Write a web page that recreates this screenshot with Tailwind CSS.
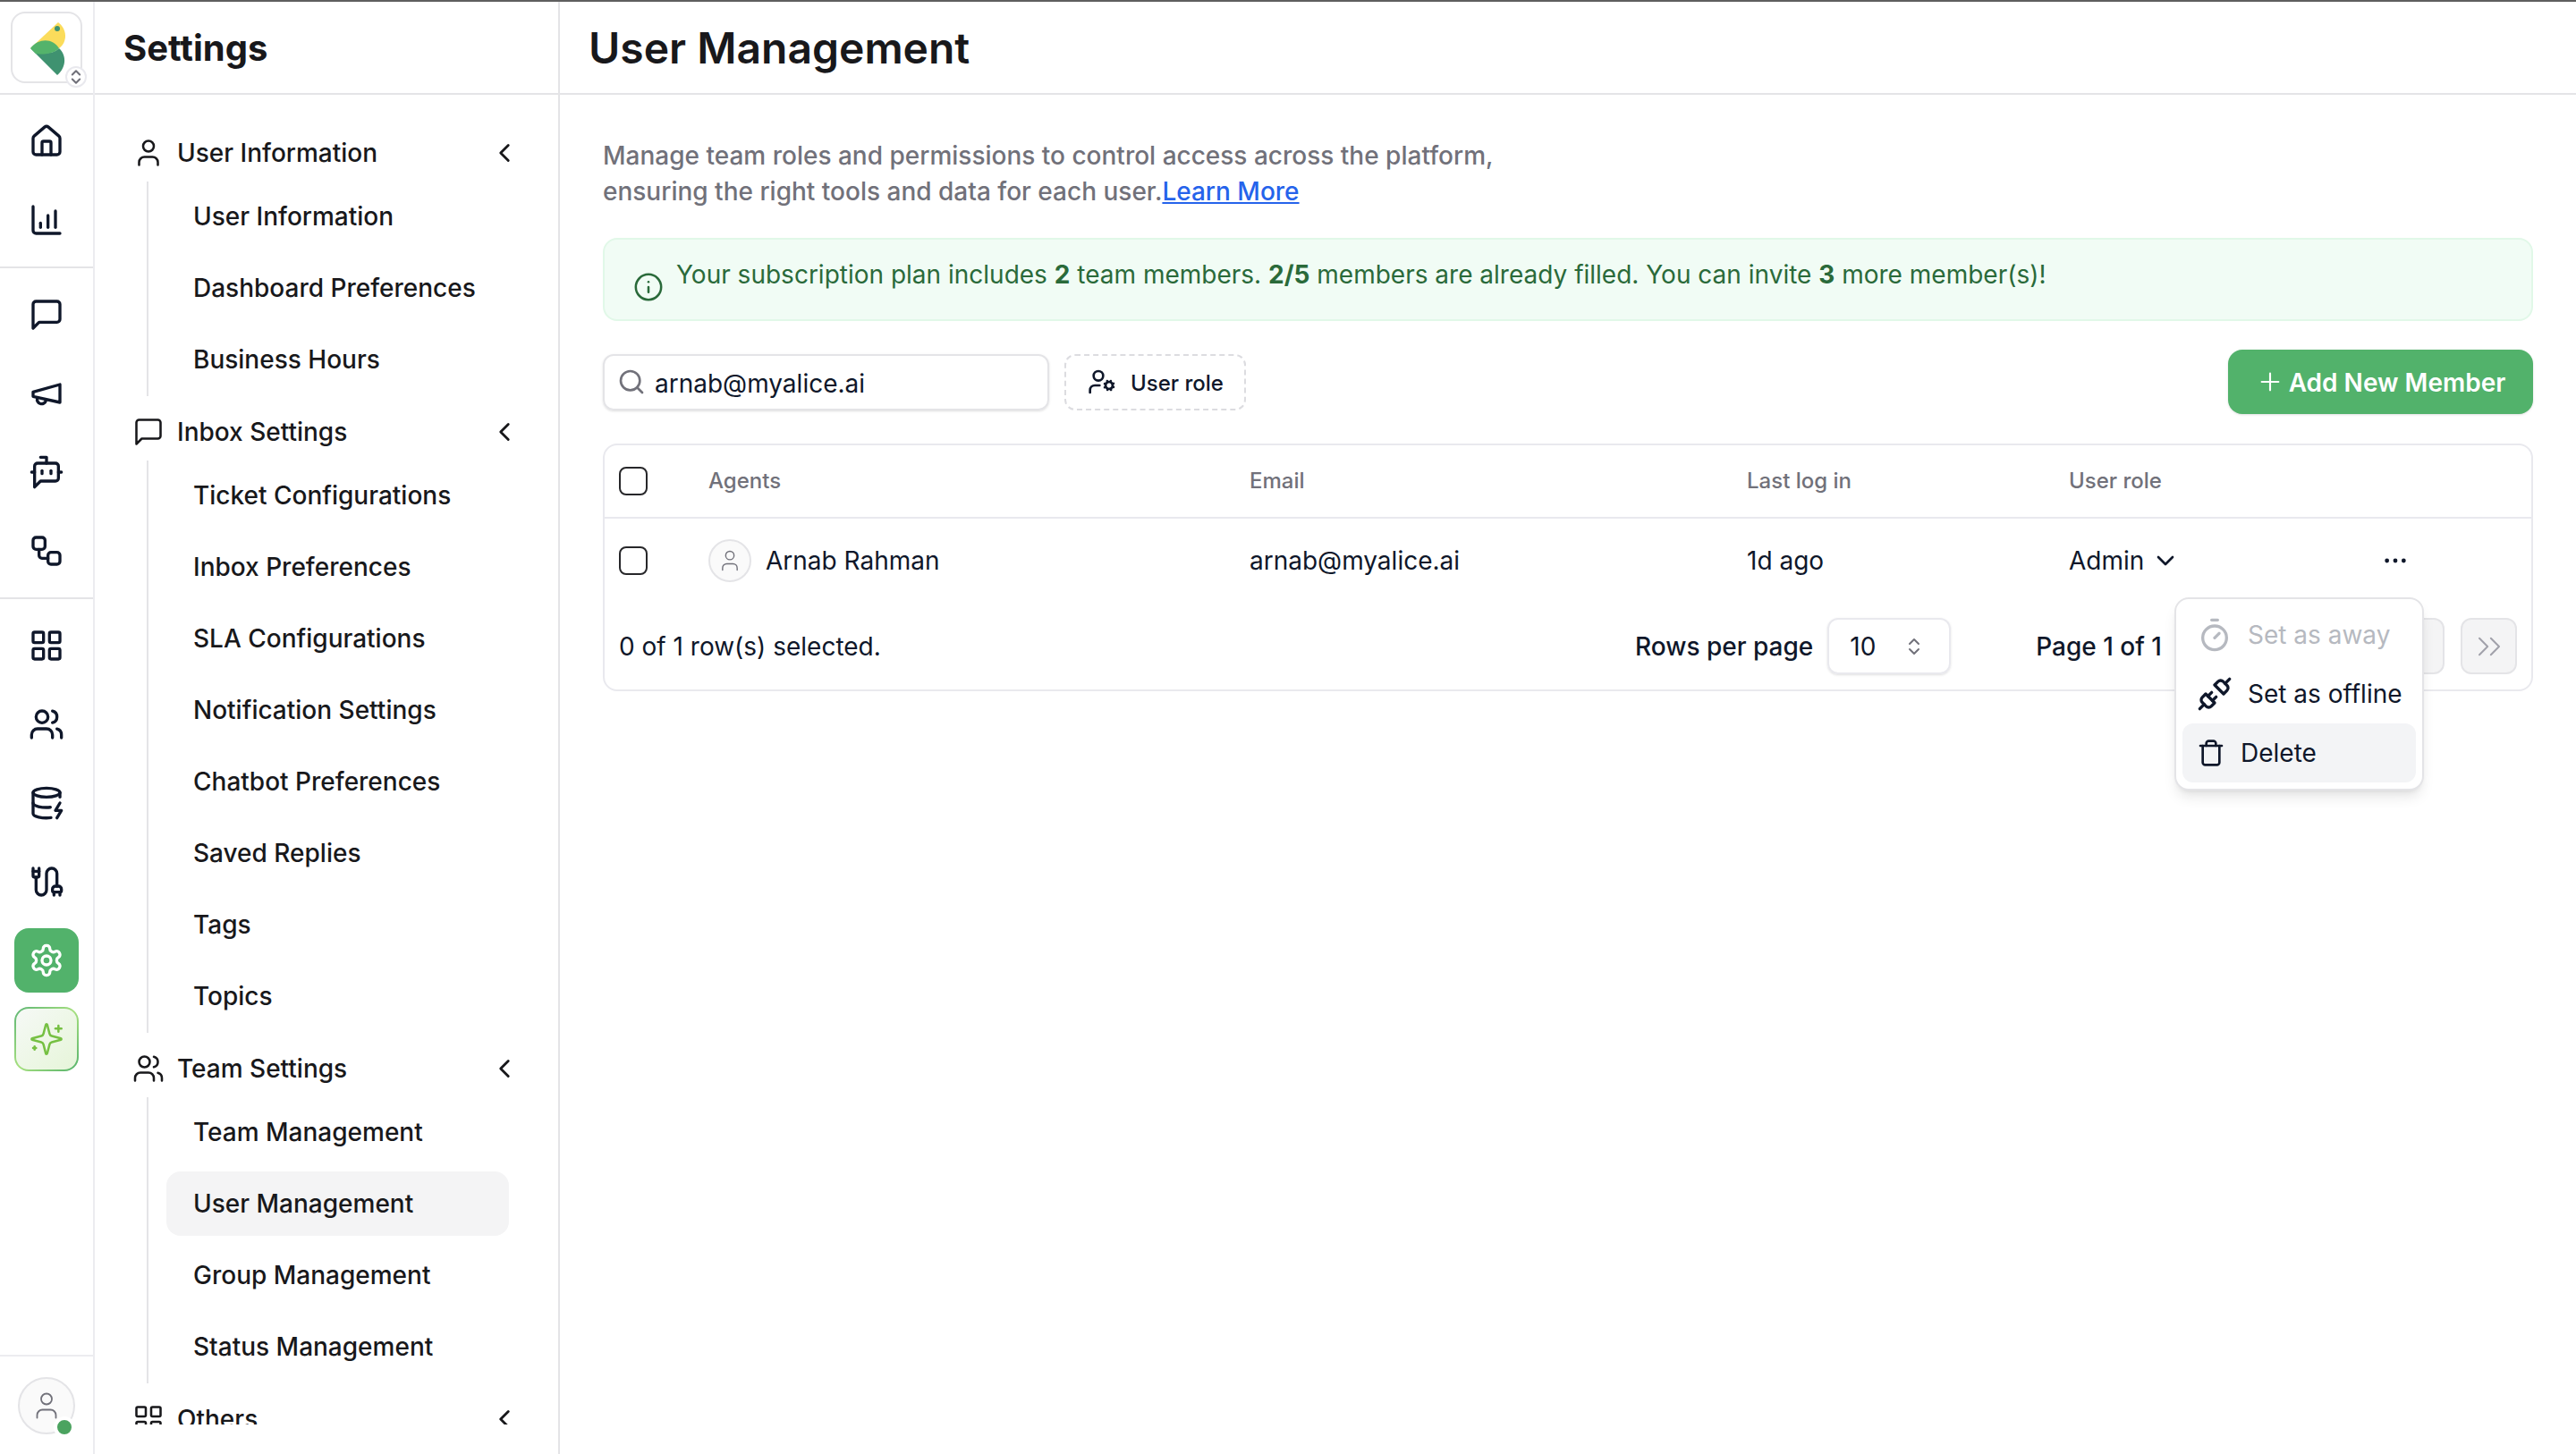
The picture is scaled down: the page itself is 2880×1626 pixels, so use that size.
<!DOCTYPE html>
<html lang="en">
<head>
    <meta charset="UTF-8">
    <title>User Management</title>
    <script src="https://cdn.jsdelivr.net/npm/@tailwindcss/browser@4"></script>
</head>
<body class="bg-white overflow-hidden font-['Inter',sans-serif] text-[28px] text-[#09090b]">
<div class="w-[2880px] h-[1626px] flex flex-col border-t-2 border-[#5f5f5f]">
    <div class="flex flex-1 min-h-0">
        <!-- Icon rail -->
        <aside class="w-[106px] shrink-0 border-r-2 border-[#ececf0] flex flex-col text-[#0f172a]">
            <div class="h-[104px] shrink-0 border-b-2 border-[#e4e4e7] flex items-center justify-center">
                <div class="relative w-[80px] h-[80px] rounded-[16px] border-2 border-[#e4e4e7] bg-white flex items-center justify-center">
                    <svg class="absolute left-[-13px] top-[-13px]" width="104" height="104" viewBox="0 0 104 104">
                        <path d="M33 52 L64 23 C74 30 75 45 65 52 Z" fill="#fbdc5b"/>
                        <path d="M33 52 C45 59 58 59 65 52 C74 60 73 74 63 82 Z" fill="#3f9270"/>
                        <path d="M33 52 C43 40 58 41 65 52 C58 59 45 59 39 58 Z" fill="#54b36b"/>
                        <circle cx="63" cy="30" r="3" fill="#3f9270"/>
                    </svg>
                    <div class="absolute right-[-7px] bottom-[-7px] w-[24px] h-[24px] rounded-full bg-white border-2 border-[#e9e9ee] flex items-center justify-center">
                        <svg width="20" height="20" viewBox="0 0 24 24" fill="none" stroke="#71717a" stroke-width="2.5" stroke-linecap="round" stroke-linejoin="round"><path d="m7 15 5 5 5-5"/><path d="m7 9 5-5 5 5"/></svg>
                    </div>
                </div>
            </div>
            <div class="h-[194px] shrink-0 border-b-2 border-[#e4e4e7] pt-[8px] flex flex-col items-center">
                <div class="w-[72px] h-[88px] flex items-center justify-center">
                    <svg width="40" height="40" viewBox="0 0 24 24" fill="none" stroke="currentColor" stroke-width="2" stroke-linecap="round" stroke-linejoin="round"><path d="M15 21v-8a1 1 0 0 0-1-1h-4a1 1 0 0 0-1 1v8"/><path d="M3 10a2 2 0 0 1 .709-1.528l7-5.999a2 2 0 0 1 2.582 0l7 5.999A2 2 0 0 1 21 10v9a2 2 0 0 1-2 2H5a2 2 0 0 1-2-2z"/></svg>
                </div>
                <div class="w-[72px] h-[88px] flex items-center justify-center">
                    <svg width="40" height="40" viewBox="0 0 24 24" fill="none" stroke="currentColor" stroke-width="2" stroke-linecap="round" stroke-linejoin="round"><path d="M3 3v16a2 2 0 0 0 2 2h16"/><path d="M18 17V6"/><path d="M13 17V9"/><path d="M8 17v-3"/></svg>
                </div>
            </div>
            <div class="h-[370px] shrink-0 border-b-2 border-[#e4e4e7] pt-[8px] flex flex-col items-center">
                <div class="w-[72px] h-[88px] flex items-center justify-center">
                    <svg width="40" height="40" viewBox="0 0 24 24" fill="none" stroke="currentColor" stroke-width="2" stroke-linecap="round" stroke-linejoin="round"><path d="M21 15a2 2 0 0 1-2 2H7l-4 4V5a2 2 0 0 1 2-2h14a2 2 0 0 1 2 2z"/></svg>
                </div>
                <div class="w-[72px] h-[88px] flex items-center justify-center">
                    <svg width="40" height="40" viewBox="0 0 24 24" fill="none" stroke="currentColor" stroke-width="2" stroke-linecap="round" stroke-linejoin="round"><path d="m3 11 18-5v12L3 14v-3z"/><path d="M11.6 16.8a3 3 0 1 1-5.8-1.6"/></svg>
                </div>
                <div class="w-[72px] h-[88px] flex items-center justify-center">
                    <svg width="40" height="40" viewBox="0 0 24 24" fill="none" stroke="currentColor" stroke-width="2" stroke-linecap="round" stroke-linejoin="round"><path d="M12 6V2H8"/><path d="m8 18-4 4V8a2 2 0 0 1 2-2h12a2 2 0 0 1 2 2v8a2 2 0 0 1-2 2Z"/><path d="M2 12h2"/><path d="M9 11v2"/><path d="M15 11v2"/><path d="M20 12h2"/></svg>
                </div>
                <div class="w-[72px] h-[88px] flex items-center justify-center">
                    <svg width="40" height="40" viewBox="0 0 24 24" fill="none" stroke="currentColor" stroke-width="2" stroke-linecap="round" stroke-linejoin="round"><rect x="3" y="3" width="8" height="8" rx="2"/><path d="M7 11v4a2 2 0 0 0 2 2h4"/><rect x="13" y="13" width="8" height="8" rx="2"/></svg>
                </div>
            </div>
            <div class="flex-1 min-h-0 pt-[8px] flex flex-col items-center">
                <div class="w-[72px] h-[88px] flex items-center justify-center">
                    <svg width="40" height="40" viewBox="0 0 24 24" fill="none" stroke="currentColor" stroke-width="2" stroke-linecap="round" stroke-linejoin="round"><rect x="3" y="3" width="7" height="7" rx="1"/><rect x="14" y="3" width="7" height="7" rx="1"/><rect x="14" y="14" width="7" height="7" rx="1"/><rect x="3" y="14" width="7" height="7" rx="1"/></svg>
                </div>
                <div class="w-[72px] h-[88px] flex items-center justify-center">
                    <svg width="40" height="40" viewBox="0 0 24 24" fill="none" stroke="currentColor" stroke-width="2" stroke-linecap="round" stroke-linejoin="round"><path d="M16 21v-2a4 4 0 0 0-4-4H6a4 4 0 0 0-4 4v2"/><circle cx="9" cy="7" r="4"/><path d="M22 21v-2a4 4 0 0 0-3-3.87"/><path d="M16 3.13a4 4 0 0 1 0 7.75"/></svg>
                </div>
                <div class="w-[72px] h-[88px] flex items-center justify-center">
                    <svg width="40" height="40" viewBox="0 0 24 24" fill="none" stroke="currentColor" stroke-width="2" stroke-linecap="round" stroke-linejoin="round"><ellipse cx="12" cy="5" rx="9" ry="3"/><path d="M3 5V19A9 3 0 0 0 15 21.84"/><path d="M21 5V8"/><path d="M21 12L18 17H22L19 22"/><path d="M3 12A9 3 0 0 0 14.59 14.87"/></svg>
                </div>
                <div class="w-[72px] h-[88px] flex items-center justify-center">
                    <svg width="40" height="40" viewBox="0 0 24 24" fill="none" stroke="currentColor" stroke-width="2" stroke-linecap="round" stroke-linejoin="round"><path d="M17 21v-2a1 1 0 0 1-1-1v-1a2 2 0 0 1 2-2h2a2 2 0 0 1 2 2v1a1 1 0 0 1-1 1"/><path d="M19 15V6.5a1 1 0 0 0-7 0v11a1 1 0 0 1-7 0V9"/><path d="M21 21v-2h-4"/><path d="M3 5V3"/><path d="M7 5V3"/><path d="M4 9a1 1 0 0 1-1-1V5h4v3a1 1 0 0 1-1 1z"/></svg>
                </div>
                <div class="w-[72px] h-[72px] mt-[8px] shrink-0 rounded-[16px] bg-[#52b26b] flex items-center justify-center text-white">
                    <svg width="40" height="40" viewBox="0 0 24 24" fill="none" stroke="currentColor" stroke-width="2" stroke-linecap="round" stroke-linejoin="round"><path d="M12.22 2h-.44a2 2 0 0 0-2 2v.18a2 2 0 0 1-1 1.73l-.43.25a2 2 0 0 1-2 0l-.15-.08a2 2 0 0 0-2.73.73l-.22.38a2 2 0 0 0 .73 2.73l.15.1a2 2 0 0 1 1 1.72v.51a2 2 0 0 1-1 1.74l-.15.09a2 2 0 0 0-.73 2.73l.22.38a2 2 0 0 0 2.73.73l.15-.08a2 2 0 0 1 2 0l.43.25a2 2 0 0 1 1 1.73V20a2 2 0 0 0 2 2h.44a2 2 0 0 0 2-2v-.18a2 2 0 0 1 1-1.73l.43-.25a2 2 0 0 1 2 0l.15.08a2 2 0 0 0 2.73-.73l.22-.39a2 2 0 0 0-.73-2.73l-.15-.08a2 2 0 0 1-1-1.74v-.5a2 2 0 0 1 1-1.74l.15-.09a2 2 0 0 0 .73-2.73l-.22-.38a2 2 0 0 0-2.73-.73l-.15.08a2 2 0 0 1-2 0l-.43-.25a2 2 0 0 1-1-1.73V4a2 2 0 0 0-2-2z"/><circle cx="12" cy="12" r="3"/></svg>
                </div>
                <div class="w-[72px] h-[72px] mt-[16px] shrink-0 rounded-[16px] bg-gradient-to-br from-[#5cb574] via-[#a6e07f] to-[#52b26b] p-[2px]">
                    <div class="w-full h-full rounded-[14px] bg-gradient-to-br from-[#f6f9f6] to-[#e6f5d9] flex items-center justify-center text-[#76c043]">
                        <svg width="40" height="40" viewBox="0 0 24 24" fill="none" stroke="currentColor" stroke-width="1.5" stroke-linecap="round" stroke-linejoin="round"><path d="M9.937 15.5A2 2 0 0 0 8.5 14.063l-6.135-1.582a.5.5 0 0 1 0-.962L8.5 9.936A2 2 0 0 0 9.937 8.5l1.582-6.135a.5.5 0 0 1 .963 0L14.063 8.5A2 2 0 0 0 15.5 9.937l6.135 1.581a.5.5 0 0 1 0 .964L15.5 14.063a2 2 0 0 0-1.437 1.437l-1.582 6.135a.5.5 0 0 1-.963 0z"/><path d="M20 3v4"/><path d="M22 5h-4"/><path d="M4 17v2"/><path d="M5 18H3"/></svg>
                    </div>
                </div>
                <div class="mt-auto h-[111px] w-full border-t-2 border-[#ececf0] flex justify-center pt-[23px]">
                    <div class="relative w-[64px] h-[64px] rounded-full border-2 border-[#e4e4e7] bg-[#fafafa] flex items-center justify-center text-[#71717a]">
                        <svg width="36" height="36" viewBox="0 0 24 24" fill="none" stroke="currentColor" stroke-width="1.2" stroke-linecap="round" stroke-linejoin="round"><path d="M19 21v-2a4 4 0 0 0-4-4H9a4 4 0 0 0-4 4v2"/><circle cx="12" cy="7" r="4"/></svg>
                        <div class="absolute right-[-2px] bottom-[-6px] w-[24px] h-[24px] rounded-full border-4 border-white bg-[#4ba35f]"></div>
                    </div>
                </div>
            </div>
        </aside>

        <!-- Settings nav -->
        <aside class="w-[520px] shrink-0 border-r-2 border-[#e4e4e7] flex flex-col">
            <div class="h-[104px] shrink-0 border-b-2 border-[#e4e4e7] flex items-center pl-[32px] pt-[2px]">
                <h2 class="text-[40px] font-bold text-[#18181b]">Settings</h2>
            </div>
            <nav class="h-[1487px] shrink-0 overflow-hidden pt-[33px] pl-[41px] text-[#18181b] font-medium">
                <div class="w-[440px]">
                    <div class="h-[63px] mb-[1px] flex items-center">
                        <svg class="w-[36px] h-[36px] ml-[1px] mr-[14px]" viewBox="0 0 24 24" fill="none" stroke="currentColor" stroke-width="1.7" stroke-linecap="round" stroke-linejoin="round"><path d="M19 21v-2a4 4 0 0 0-4-4H9a4 4 0 0 0-4 4v2"/><circle cx="12" cy="7" r="4"/></svg>
                        <span class="flex-1">User Information</span>
                        <svg class="w-[34px] h-[34px] mr-[6px]" viewBox="0 0 24 24" fill="none" stroke="currentColor" stroke-width="2" stroke-linecap="round" stroke-linejoin="round"><path d="m15 18-6-6 6-6"/></svg>
                    </div>
                    <ul class="ml-[17px] mb-[8px] pt-[3px] pb-[5px] pl-[20px] border-l-2 border-[#e4e4e7] flex flex-col gap-[8px]">
                        <li class="w-[383px] h-[72px] rounded-[16px] flex items-center pl-[30px]">User Information</li>
                        <li class="w-[383px] h-[72px] rounded-[16px] flex items-center pl-[30px]">Dashboard Preferences</li>
                        <li class="w-[383px] h-[72px] rounded-[16px] flex items-center pl-[30px]">Business Hours</li>
                    </ul>
                    <div class="h-[63px] mb-[1px] flex items-center">
                        <svg class="w-[36px] h-[36px] ml-[1px] mr-[14px]" viewBox="0 0 24 24" fill="none" stroke="currentColor" stroke-width="1.7" stroke-linecap="round" stroke-linejoin="round"><path d="M21 15a2 2 0 0 1-2 2H7l-4 4V5a2 2 0 0 1 2-2h14a2 2 0 0 1 2 2z"/></svg>
                        <span class="flex-1">Inbox Settings</span>
                        <svg class="w-[34px] h-[34px] mr-[6px]" viewBox="0 0 24 24" fill="none" stroke="currentColor" stroke-width="2" stroke-linecap="round" stroke-linejoin="round"><path d="m15 18-6-6 6-6"/></svg>
                    </div>
                    <ul class="ml-[17px] mb-[8px] pt-[3px] pb-[5px] pl-[20px] border-l-2 border-[#e4e4e7] flex flex-col gap-[8px]">
                        <li class="w-[383px] h-[72px] rounded-[16px] flex items-center pl-[30px]">Ticket Configurations</li>
                        <li class="w-[383px] h-[72px] rounded-[16px] flex items-center pl-[30px]">Inbox Preferences</li>
                        <li class="w-[383px] h-[72px] rounded-[16px] flex items-center pl-[30px]">SLA Configurations</li>
                        <li class="w-[383px] h-[72px] rounded-[16px] flex items-center pl-[30px]">Notification Settings</li>
                        <li class="w-[383px] h-[72px] rounded-[16px] flex items-center pl-[30px]">Chatbot Preferences</li>
                        <li class="w-[383px] h-[72px] rounded-[16px] flex items-center pl-[30px]">Saved Replies</li>
                        <li class="w-[383px] h-[72px] rounded-[16px] flex items-center pl-[30px]">Tags</li>
                        <li class="w-[383px] h-[72px] rounded-[16px] flex items-center pl-[30px]">Topics</li>
                    </ul>
                    <div class="h-[63px] mb-[1px] flex items-center">
                        <svg class="w-[36px] h-[36px] ml-[1px] mr-[14px]" viewBox="0 0 24 24" fill="none" stroke="currentColor" stroke-width="1.7" stroke-linecap="round" stroke-linejoin="round"><path d="M16 21v-2a4 4 0 0 0-4-4H6a4 4 0 0 0-4 4v2"/><circle cx="9" cy="7" r="4"/><path d="M22 21v-2a4 4 0 0 0-3-3.87"/><path d="M16 3.13a4 4 0 0 1 0 7.75"/></svg>
                        <span class="flex-1">Team Settings</span>
                        <svg class="w-[34px] h-[34px] mr-[6px]" viewBox="0 0 24 24" fill="none" stroke="currentColor" stroke-width="2" stroke-linecap="round" stroke-linejoin="round"><path d="m15 18-6-6 6-6"/></svg>
                    </div>
                    <ul class="ml-[17px] mb-[8px] pt-[3px] pb-[5px] pl-[20px] border-l-2 border-[#e4e4e7] flex flex-col gap-[8px]">
                        <li class="w-[383px] h-[72px] rounded-[16px] flex items-center pl-[30px]">Team Management</li>
                        <li class="w-[383px] h-[72px] rounded-[16px] flex items-center pl-[30px] bg-[#f4f4f5]">User Management</li>
                        <li class="w-[383px] h-[72px] rounded-[16px] flex items-center pl-[30px]">Group Management</li>
                        <li class="w-[383px] h-[72px] rounded-[16px] flex items-center pl-[30px]">Status Management</li>
                    </ul>
                    <div class="h-[63px] mb-[1px] flex items-center">
                        <svg class="w-[36px] h-[36px] ml-[1px] mr-[14px]" viewBox="0 0 24 24" fill="none" stroke="currentColor" stroke-width="1.7" stroke-linecap="round" stroke-linejoin="round"><rect x="3" y="3" width="7" height="7" rx="1"/><rect x="14" y="3" width="7" height="7" rx="1"/><rect x="14" y="14" width="7" height="7" rx="1"/><rect x="3" y="14" width="7" height="7" rx="1"/></svg>
                        <span class="flex-1">Others</span>
                        <svg class="w-[34px] h-[34px] mr-[6px]" viewBox="0 0 24 24" fill="none" stroke="currentColor" stroke-width="2" stroke-linecap="round" stroke-linejoin="round"><path d="m15 18-6-6 6-6"/></svg>
                    </div>
                </div>
            </nav>
        </aside>

        <!-- Main -->
        <main class="flex-1 min-w-0 flex flex-col">
            <div class="h-[104px] shrink-0 border-b-2 border-[#e4e4e7] flex items-center pl-[32px] pt-[2px]">
                <h1 class="text-[48px] font-semibold text-[#18181b]">User Management</h1>
            </div>
            <div class="pl-[48px] pr-[48px] pt-[48px]">
                <p class="w-[1100px] leading-[40px] text-[#71717a] font-medium">Manage team roles and permissions to control access across the platform, ensuring the right tools and data for each user.<a class="text-[#2563eb] underline">Learn More</a></p>
                <div class="mt-[32px] h-[93px] rounded-[16px] border-2 border-[#e1f8e8] bg-[#f1fcf5] text-[#2a6a3a] font-normal flex pl-[32px] pt-[18px]">
                    <svg class="w-[34px] h-[34px] mt-[18px] mr-[14px] shrink-0" viewBox="0 0 24 24" fill="none" stroke="currentColor" stroke-width="1.8" stroke-linecap="round" stroke-linejoin="round"><circle cx="12" cy="12" r="10"/><path d="M12 16v-4"/><path d="M12 8h.01"/></svg>
                    <span>Your subscription plan includes <b class="font-bold">2</b> team members. <b class="font-bold">2/5</b> members are already filled. You can invite <b class="font-bold">3</b> more member(s)!</span>
                </div>
                <div class="mt-[32px] h-[72px] flex items-center">
                    <div class="w-[499px] h-[63px] rounded-[12px] border-2 border-[#e4e4e7] shadow-sm flex items-center pl-[14px] text-[#0f172a]">
                        <svg class="w-[32px] h-[32px] mr-[10px] text-[#71717a]" viewBox="0 0 24 24" fill="none" stroke="currentColor" stroke-width="2" stroke-linecap="round" stroke-linejoin="round"><circle cx="11" cy="11" r="8"/><path d="m21 21-4.3-4.3"/></svg>
                        <span class="pt-[3px]">arnab@myalice.ai</span>
                    </div>
                    <div class="ml-[17px] w-[203px] h-[63px] rounded-[12px] border-2 border-dashed border-[#dcdce0] flex items-center pl-[24px] text-[24px] font-medium text-[#0f172a]">
                        <svg class="w-[32px] h-[32px] mr-[16px]" viewBox="0 0 24 24" fill="none" stroke="currentColor" stroke-width="2" stroke-linecap="round" stroke-linejoin="round"><circle cx="18" cy="15" r="3"/><circle cx="9" cy="7" r="4"/><path d="M10 15H6a4 4 0 0 0-4 4v2"/><path d="m21.7 16.4-.9-.3"/><path d="m15.2 13.9-.9-.3"/><path d="m16.6 18.7.3-.9"/><path d="m19.1 12.2.3-.9"/><path d="m19.6 18.7-.4-1"/><path d="m16.8 12.3-.4-1"/><path d="m14.3 16.6 1-.4"/><path d="m20.7 13.8 1-.4"/></svg>
                        <span class="pt-[3px]">User role</span>
                    </div>
                    <button class="ml-auto w-[341px] h-[72px] rounded-[16px] bg-[#52b26b] text-white text-[28px] font-semibold shadow-sm flex items-center justify-center">
                        <svg class="w-[32px] h-[32px] mr-[5px]" viewBox="0 0 24 24" fill="none" stroke="currentColor" stroke-width="1.6" stroke-linecap="round" stroke-linejoin="round"><path d="M5 12h14"/><path d="M12 5v14"/></svg>
                        <span class="pt-[2px]">Add New Member</span>
                    </button>
                </div>

                <!-- Table -->
                <div class="relative mt-[33px] h-[277px] rounded-[16px] border-2 border-[#e9e9ee]">
                    <div class="h-[82px] border-b-2 border-[#e9e9ee] grid grid-cols-[100px_605px_556px_360px_1fr] items-center pl-[16px] text-[24px] font-medium text-[#71717a]">
                        <div class="w-[32px] h-[32px] rounded-[8px] border-2 border-[#27272a]"></div>
                        <div>Agents</div>
                        <div>Email</div>
                        <div>Last log in</div>
                        <div>User role</div>
                    </div>
                    <div class="h-[94px] grid grid-cols-[100px_605px_556px_360px_1fr] items-center pl-[16px] text-[#0f172a]">
                        <div class="w-[32px] h-[32px] rounded-[8px] border-2 border-[#27272a]"></div>
                        <div class="flex items-center">
                            <div class="w-[48px] h-[48px] rounded-full border-2 border-[#e4e4e7] bg-[#fafafa] flex items-center justify-center mr-[16px]">
                                <svg class="w-[28px] h-[28px] text-[#71717a]" viewBox="0 0 24 24" fill="none" stroke="currentColor" stroke-width="1.2" stroke-linecap="round" stroke-linejoin="round"><path d="M19 21v-2a4 4 0 0 0-4-4H9a4 4 0 0 0-4 4v2"/><circle cx="12" cy="7" r="4"/></svg>
                            </div>
                            Arnab Rahman
                        </div>
                        <div>arnab@myalice.ai</div>
                        <div>1d ago</div>
                        <div class="flex items-center">
                            Admin
                            <svg class="w-[32px] h-[32px] ml-[8px]" viewBox="0 0 24 24" fill="none" stroke="currentColor" stroke-width="2" stroke-linecap="round" stroke-linejoin="round"><path d="m6 9 6 6 6-6"/></svg>
                            <svg class="w-[32px] h-[32px] ml-[225px]" viewBox="0 0 24 24" fill="currentColor"><circle cx="5" cy="12" r="1.8"/><circle cx="12" cy="12" r="1.8"/><circle cx="19" cy="12" r="1.8"/></svg>
                        </div>
                    </div>
                    <div class="h-[97px] flex items-center pl-[16px] text-[#0f172a]">
                        <span class="flex-1">0 of 1 row(s) selected.</span>
                        <span class="font-medium">Rows per page</span>
                        <div class="ml-[16px] w-[138px] h-[63px] rounded-[12px] border-2 border-[#e9e9ee] shadow-sm flex items-center pl-[23px]">
                            <span class="flex-1">10</span>
                            <svg class="w-[24px] h-[24px] mr-[27px] text-[#71717a]" viewBox="0 0 24 24" fill="none" stroke="currentColor" stroke-width="2" stroke-linecap="round" stroke-linejoin="round"><path d="m7 15 5 5 5-5"/><path d="m7 9 5-5 5 5"/></svg>
                        </div>
                        <span class="ml-[95px] font-medium">Page 1 of 1</span>
                        <div class="ml-[91px] w-[63px] h-[63px] rounded-[12px] border-2 border-[#e4e4e7] bg-[#f4f4f5]"></div>
                        <div class="ml-[18px] w-[63px] h-[63px] rounded-[12px] border-2 border-[#e4e4e7] bg-[#f4f4f5]"></div>
                        <div class="ml-[18px] w-[63px] h-[63px] rounded-[12px] border-2 border-[#e4e4e7] bg-[#f4f4f5]"></div>
                        <div class="ml-[18px] mr-[16px] w-[63px] h-[63px] rounded-[12px] border-2 border-[#e4e4e7] bg-[#f4f4f5] flex items-center justify-center">
                            <svg class="w-[44px] h-[44px] text-[#a1a1aa]" viewBox="0 0 24 24" fill="none" stroke="currentColor" stroke-width="1.1" stroke-linecap="round" stroke-linejoin="round"><path d="m6 17 5-5-5-5"/><path d="m13 17 5-5-5-5"/></svg>
                        </div>
                    </div>

                    <!-- Row action menu -->
                    <div class="absolute left-[1755px] top-[170px] w-[279px] h-[216px] rounded-[16px] border-2 border-[#e4e4e7] bg-white shadow-lg text-[#0f172a] font-normal">
                        <div class="h-[66px] mt-[7px] flex items-center pl-[23px] text-[#b6b9c0]">
                            <svg class="w-[40px] h-[40px] mr-[17px]" viewBox="0 0 24 24" fill="none" stroke="currentColor" stroke-width="2" stroke-linecap="round" stroke-linejoin="round"><path d="M10 2h4"/><path d="m12 14 3-3"/><circle cx="12" cy="14" r="8"/></svg>
                            Set as away
                        </div>
                        <div class="h-[66px] flex items-center pl-[23px]">
                            <svg class="w-[40px] h-[40px] mr-[17px]" viewBox="0 0 24 24" fill="none" stroke="currentColor" stroke-width="2" stroke-linecap="round" stroke-linejoin="round"><path d="m19 5 3-3"/><path d="m2 22 3-3"/><path d="M6.3 20.3a2.4 2.4 0 0 0 3.4 0L12 18l-6-6-2.3 2.3a2.4 2.4 0 0 0 0 3.4Z"/><path d="M7.5 13.5 10 11"/><path d="M10.5 16.5 13 14"/><path d="m12 6 6 6 2.3-2.3a2.4 2.4 0 0 0 0-3.4l-2.6-2.6a2.4 2.4 0 0 0-3.4 0Z"/></svg>
                            Set as offline
                        </div>
                        <div class="h-[66px] mx-[7px] rounded-[12px] bg-[#f3f4f6] flex items-center pl-[16px]">
                            <svg class="w-[32px] h-[32px] mr-[17px]" viewBox="0 0 24 24" fill="none" stroke="currentColor" stroke-width="2" stroke-linecap="round" stroke-linejoin="round"><path d="M3 6h18"/><path d="M19 6v14c0 1-1 2-2 2H7c-1 0-2-1-2-2V6"/><path d="M8 6V4c0-1 1-2 2-2h4c1 0 2 1 2 2v2"/></svg>
                            Delete
                        </div>
                    </div>
                </div>
            </div>
        </main>
    </div>
</div>
</body>
</html>
